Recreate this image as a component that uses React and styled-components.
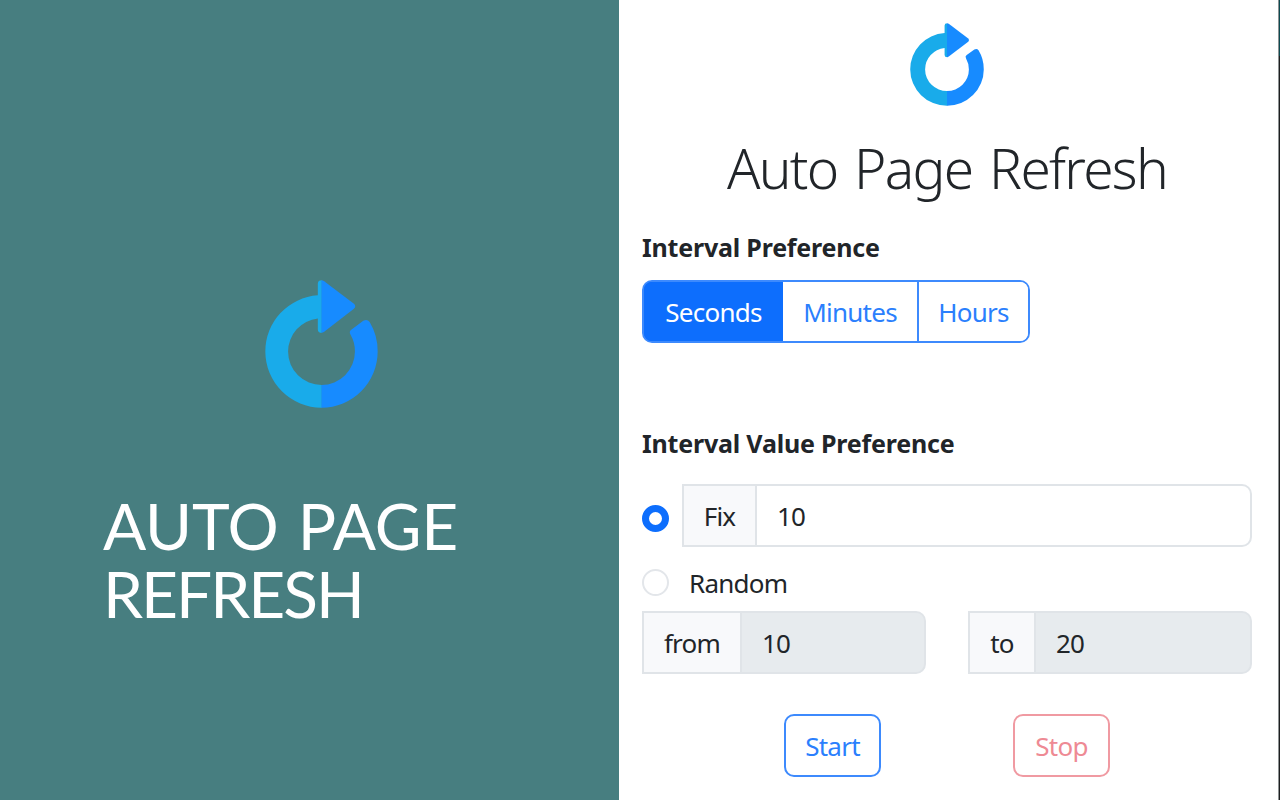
import React from "react";
import styled, { createGlobalStyle } from "styled-components";

const GlobalStyle = createGlobalStyle`
  * { box-sizing: border-box; }
  body { margin: 0; background: #fff; }
`;

const Page = styled.div`
  display: flex;
  width: 1280px;
  height: 800px;
  overflow: hidden;
`;

const Hero = styled.section`
  width: 619px;
  background: #477e80;
  padding: 280px 0 0 103px;
`;

const HeroTitle = styled.h1`
  margin: 84px 0 0;
  color: #fff;
  font: 400 64px/68px Lato, sans-serif;
  white-space: nowrap;
`;

const TitleLine = styled.span`
  display: block;
  letter-spacing: ${(p) => p.$spacing}px;
  word-spacing: 3px;
`;

const Logo = styled.svg`
  display: block;
  width: ${(p) => p.$width}px;
  height: ${(p) => p.$height}px;
  margin-left: ${(p) => p.$left}px;
`;

const Panel = styled.main`
  width: 659px;
  padding: 23px 26px 0 23px;
  background: #fff;
  color: #212529;
  font: 400 26px/36px "Noto Sans", sans-serif;
  letter-spacing: -0.75px;
`;

const Edge = styled.div`
  width: 2px;
  background: linear-gradient(#0c4a50 0 56px, #1d1f20 56px);
  border-left: 1px solid #8d9293;
`;

const PanelTitle = styled.h2`
  margin: 22px 0 0;
  height: 82px;
  font: 300 55px/80px "Noto Sans", sans-serif;
  letter-spacing: -1.7px;
  word-spacing: 4px;
  text-align: center;
  white-space: nowrap;
`;

const Label = styled.h3`
  margin: ${(p) => p.$top}px 0 0;
  font: 700 25px/36px "Noto Sans", sans-serif;
  letter-spacing: -0.2px;
  white-space: nowrap;
`;

const Segments = styled.div`
  display: flex;
  width: 388px;
  height: 63px;
  margin-top: 15px;
  border: 2px solid #3d8afd;
  border-radius: 10px;
  background: linear-gradient(90deg, #0d6efd 50px, #fff 50px);
  overflow: hidden;
`;

const Segment = styled.button`
  width: ${(p) => p.$width}px;
  padding: 0;
  border: 0;
  border-left: ${(p) => (p.$divided ? "2px solid #3d8afd" : "0")};
  background: ${(p) => (p.$active ? "#0d6efd" : "#fff")};
  color: ${(p) => (p.$active ? "#fff" : "#2b7ffd")};
  font: inherit;
  letter-spacing: inherit;
`;

const Row = styled.div`
  display: flex;
  align-items: center;
  margin-top: ${(p) => p.$top}px;
  height: ${(p) => p.$height}px;
`;

const Radio = styled.span`
  flex: none;
  width: 27px;
  height: 27px;
  margin-top: ${(p) => p.$drop || 0}px;
  margin-right: ${(p) => p.$gap}px;
  border-radius: 50%;
  border: ${(p) => (p.$checked ? "7.5px solid #0d6efd" : "2px solid #e3e6ea")};
  background: #fff;
`;

const Group = styled.div`
  display: flex;
  width: ${(p) => p.$width}px;
  height: 63px;
  margin-right: ${(p) => p.$gap || 0}px;
  border: 2px solid #e0e4e8;
  border-radius: 0 10px 10px 0;
  background: ${(p) => (p.$disabled ? "#e7ebee" : "#fff")};
  overflow: hidden;
`;

const Addon = styled.span`
  display: flex;
  align-items: center;
  justify-content: center;
  width: ${(p) => p.$width}px;
  background: #f8f9fb;
  border-right: 2px solid #e0e4e8;
`;

const Value = styled.span`
  display: flex;
  align-items: center;
  padding-left: 20px;
`;

const Actions = styled.div`
  display: flex;
  gap: 132px;
  margin: 40px 0 0 142px;
`;

const ActionButton = styled.button`
  width: 97px;
  height: 63px;
  padding: 0;
  border: 2px solid ${(p) => (p.$danger ? "#f09aa2" : "#3d8afd")};
  border-radius: 10px;
  background: #fff;
  color: ${(p) => (p.$danger ? "#ee8a94" : "#2b7ffd")};
  font: inherit;
  letter-spacing: inherit;
`;

function RefreshLogo({ width, height, left }) {
  return (
    <Logo viewBox="43 29 338 383" preserveAspectRatio="none" $width={width} $height={height} $left={left} aria-hidden="true">
      <path fill="#19abea" d="M213 411A168 168 0 0 1 44 243A168 168 0 0 1 201 75V40Q201 30 213 30V187Q201 187 201 177V144A100 100 0 0 0 112 243A100 100 0 0 0 213 343Z" />
      <path fill="#178bff" d="M212 30Q216 30 220 33L309 100Q317 107 309 115L220 184Q216 187 212 187Z" />
      <path fill="#178bff" d="M212 411A168 168 0 0 0 380 243A168 168 0 0 0 356 155Q349 145 337 151L302 177Q293 183 299 193A100 100 0 0 1 312 243A100 100 0 0 1 212 343Z" />
    </Logo>
  );
}

export default function App() {
  return (
    <>
      <GlobalStyle />
      <Page>
        <Hero>
          <RefreshLogo width={113} height={128} left={161.5} />
          <HeroTitle>
            <TitleLine $spacing={-0.2}>AUTO PAGE</TitleLine>
            <TitleLine $spacing={-2}>REFRESH</TitleLine>
          </HeroTitle>
        </Hero>
        <Panel>
          <RefreshLogo width={74} height={83} left={268} />
          <PanelTitle>Auto Page Refresh</PanelTitle>
          <Label $top={19}>Interval Preference</Label>
          <Segments>
            <Segment $active $width={139}>Seconds</Segment>
            <Segment $width={134}>Minutes</Segment>
            <Segment $divided $width={111}>Hours</Segment>
          </Segments>
          <Label $top={82}>Interval Value Preference</Label>
          <Row $top={23} $height={63}>
            <Radio $checked $drop={5} $gap={13} />
            <Group $width={570}>
              <Addon $width={73}>Fix</Addon>
              <Value>10</Value>
            </Group>
          </Row>
          <Row $top={17} $height={37}>
            <Radio $gap={20} />
            <span>Random</span>
          </Row>
          <Row $top={10} $height={63}>
            <Group $disabled $width={284} $gap={42}>
              <Addon $width={98}>from</Addon>
              <Value>10</Value>
            </Group>
            <Group $disabled $width={284}>
              <Addon $width={66}>to</Addon>
              <Value>20</Value>
            </Group>
          </Row>
          <Actions>
            <ActionButton>Start</ActionButton>
            <ActionButton $danger>Stop</ActionButton>
          </Actions>
        </Panel>
        <Edge />
      </Page>
    </>
  );
}
